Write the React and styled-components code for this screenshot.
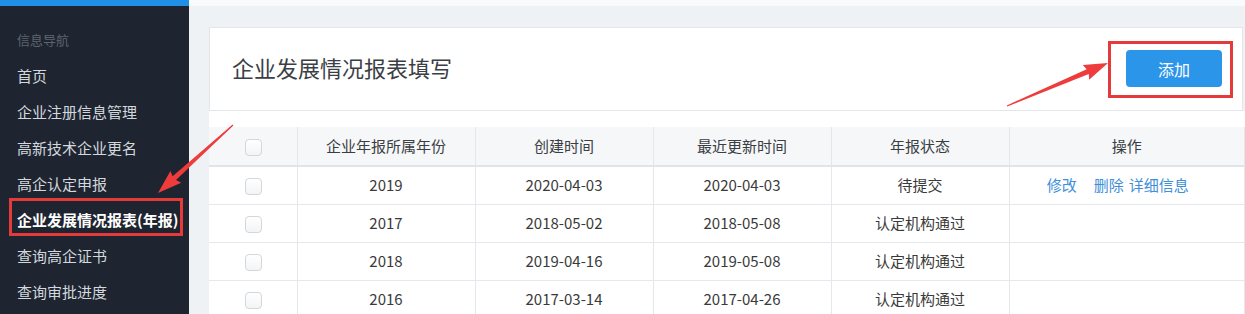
import styled, { createGlobalStyle } from "styled-components";

const GlobalStyle = createGlobalStyle`
  html, body {
    margin: 0;
    padding: 0;
    background: #eff2f5;
    overflow: hidden;
  }
  * {
    box-sizing: border-box;
  }
`;

const FONT = `"Microsoft YaHei", "Noto Sans CJK SC", "Noto Sans", sans-serif`;

const menu = [
  "首页",
  "企业注册信息管理",
  "高新技术企业更名",
  "高企认定申报",
  "企业发展情况报表(年报)",
  "查询高企证书",
  "查询审批进度",
];

const rows = [
  { year: "2019", created: "2020-04-03", updated: "2020-04-03", status: "待提交", editable: true },
  { year: "2017", created: "2018-05-02", updated: "2018-05-08", status: "认定机构通过" },
  { year: "2018", created: "2019-04-16", updated: "2019-05-08", status: "认定机构通过" },
  { year: "2016", created: "2017-03-14", updated: "2017-04-26", status: "认定机构通过" },
];

// tapered annotation arrow, from tail to tip
function arrowPoints(tx, ty, px, py) {
  const dx = px - tx;
  const dy = py - ty;
  const len = Math.hypot(dx, dy);
  const ux = dx / len;
  const uy = dy / len;
  const nx = -uy;
  const ny = ux;
  const headLen = 22;
  const bx = px - ux * headLen;
  const by = py - uy * headLen;
  const pt = (x, y, w) => [x + nx * w, y + ny * w];
  const pts = [
    pt(tx, ty, 0.6),
    pt(bx, by, 2.6),
    pt(bx - ux * 2, by - uy * 2, 8),
    [px, py],
    pt(bx - ux * 2, by - uy * 2, -8),
    pt(bx, by, -2.6),
    pt(tx, ty, -0.6),
  ];
  return pts.map((p) => p.map((v) => v.toFixed(1)).join(",")).join(" ");
}

export default function App() {
  return (
    <Page>
      <GlobalStyle />
      <Sidebar>
        <Brand />
        <Nav>
          <NavLabel>信息导航</NavLabel>
          {menu.map((item, i) => (
            <NavItem key={item} active={i === 4}>
              {item}
            </NavItem>
          ))}
        </Nav>
      </Sidebar>
      <Main>
        <TopStrip />
        <Content>
          <HeaderCard>
            <Title>企业发展情况报表填写</Title>
            <Highlight>
              <AddButton>添加</AddButton>
            </Highlight>
          </HeaderCard>
          <TableSection>
            <Table>
              <colgroup>
                <col style={{ width: 88 }} />
                <col style={{ width: 178 }} />
                <col style={{ width: 178 }} />
                <col style={{ width: 178 }} />
                <col style={{ width: 178 }} />
                <col />
              </colgroup>
              <thead>
                <tr>
                  <Th>
                    <Checkbox />
                  </Th>
                  <Th>企业年报所属年份</Th>
                  <Th>创建时间</Th>
                  <Th>最近更新时间</Th>
                  <Th>年报状态</Th>
                  <Th>操作</Th>
                </tr>
              </thead>
              <tbody>
                {rows.map((r) => (
                  <tr key={r.year}>
                    <Td>
                      <Checkbox />
                    </Td>
                    <Td>{r.year}</Td>
                    <Td>{r.created}</Td>
                    <Td>{r.updated}</Td>
                    <Td>{r.status}</Td>
                    <ActionCell>
                      {r.editable && (
                        <>
                          <Link gap={17}>修改</Link>
                          <Link gap={5}>删除</Link>
                          <Link>详细信息</Link>
                        </>
                      )}
                    </ActionCell>
                  </tr>
                ))}
              </tbody>
            </Table>
          </TableSection>
        </Content>
      </Main>
      <Annotations width="1245" height="314" viewBox="0 0 1245 314">
        <polygon points={arrowPoints(1007, 106, 1108, 63)} fill="#ee3b3b" />
        <polygon points={arrowPoints(233, 125, 158, 193)} fill="#ee3b3b" />
      </Annotations>
    </Page>
  );
}

const Page = styled.div`
  position: relative;
  display: flex;
  width: 1245px;
  height: 314px;
  font-family: ${FONT};
  overflow: hidden;
`;

const Sidebar = styled.aside`
  width: 189px;
  flex-shrink: 0;
  background: #1f2530;
  display: flex;
  flex-direction: column;
`;

const Brand = styled.div`
  height: 6px;
  flex-shrink: 0;
  background: #1f8fe8;
`;

const Nav = styled.nav`
  padding-top: 16px;
  flex-shrink: 0;
  display: flex;
  flex-direction: column;
`;

const NavLabel = styled.div`
  height: 36px;
  line-height: 36px;
  padding-left: 17px;
  font-size: 13px;
  color: #5b646f;
`;

const NavItem = styled.div`
  position: relative;
  height: 36px;
  line-height: 36px;
  padding-left: 17px;
  font-size: 15px;
  white-space: nowrap;
  color: ${(p) => (p.active ? "#ffffff" : "#d2d8de")};
  font-weight: ${(p) => (p.active ? 700 : 400)};
  &::after {
    content: "";
    display: ${(p) => (p.active ? "block" : "none")};
    position: absolute;
    left: 9px;
    right: 6px;
    top: -4px;
    bottom: 2px;
    border: 3px solid #e53a3a;
  }
`;

const Main = styled.main`
  flex: 1;
  display: flex;
  flex-direction: column;
  background: #eff2f5;
`;

const TopStrip = styled.div`
  height: 6px;
  flex-shrink: 0;
  background: #f9fafb;
`;

const Content = styled.div`
  flex-shrink: 0;
  padding: 21px 0 0 20px;
  display: flex;
  flex-direction: column;
`;

const HeaderCard = styled.div`
  height: 84px;
  flex-shrink: 0;
  margin-right: 2px;
  background: #ffffff;
  border: 1px solid #e3e6ea;
  display: flex;
  align-items: center;
  justify-content: space-between;
  padding: 0 9px 0 22px;
`;

const Title = styled.h1`
  margin: 0 0 4px;
  font-size: 22px;
  font-weight: 400;
  color: #3b3f45;
  line-height: 30px;
`;

const Highlight = styled.div`
  border: 3px solid #e53a3a;
  padding: 6px 8px 8px 15px;
  margin-top: 1px;
`;

const AddButton = styled.button`
  width: 96px;
  height: 37px;
  border: none;
  border-radius: 4px;
  background: #2b95e9;
  color: #ffffff;
  font-family: ${FONT};
  font-size: 16px;
  display: block;
  padding: 0;
`;

const TableSection = styled.div`
  flex-shrink: 0;
  background: #ffffff;
  padding-top: 16px;
`;

const Table = styled.table`
  width: 100%;
  table-layout: fixed;
  border-collapse: collapse;
  font-size: 15px;
  color: #3a3a3a;
`;

const Th = styled.th`
  height: 39px;
  background: #f5f7f9;
  font-weight: 400;
  color: #3a3d42;
  text-align: center;
  border-right: 1px solid #e4e7eb;
  border-bottom: 2px solid #e1e4e8;
  padding: 0;
  line-height: 20px;
`;

const Td = styled.td`
  height: 38px;
  text-align: center;
  border-right: 1px solid #e4e7eb;
  border-bottom: 1px solid #e6e8eb;
  padding: 0;
  line-height: 20px;
`;

const ActionCell = styled(Td)`
  padding-right: 18px;
  white-space: nowrap;
`;

const Link = styled.a`
  color: #3f8fd9;
  cursor: pointer;
  margin-right: ${(p) => p.gap || 0}px;
`;

const Checkbox = styled.span`
  display: inline-block;
  vertical-align: middle;
  width: 17px;
  height: 17px;
  border: 1px solid #d3d6db;
  border-radius: 4px;
  background: linear-gradient(#ffffff, #f3f4f6);
  margin-left: 1px;
`;

const Annotations = styled.svg`
  position: absolute;
  top: 0;
  left: 0;
  pointer-events: none;
`;
